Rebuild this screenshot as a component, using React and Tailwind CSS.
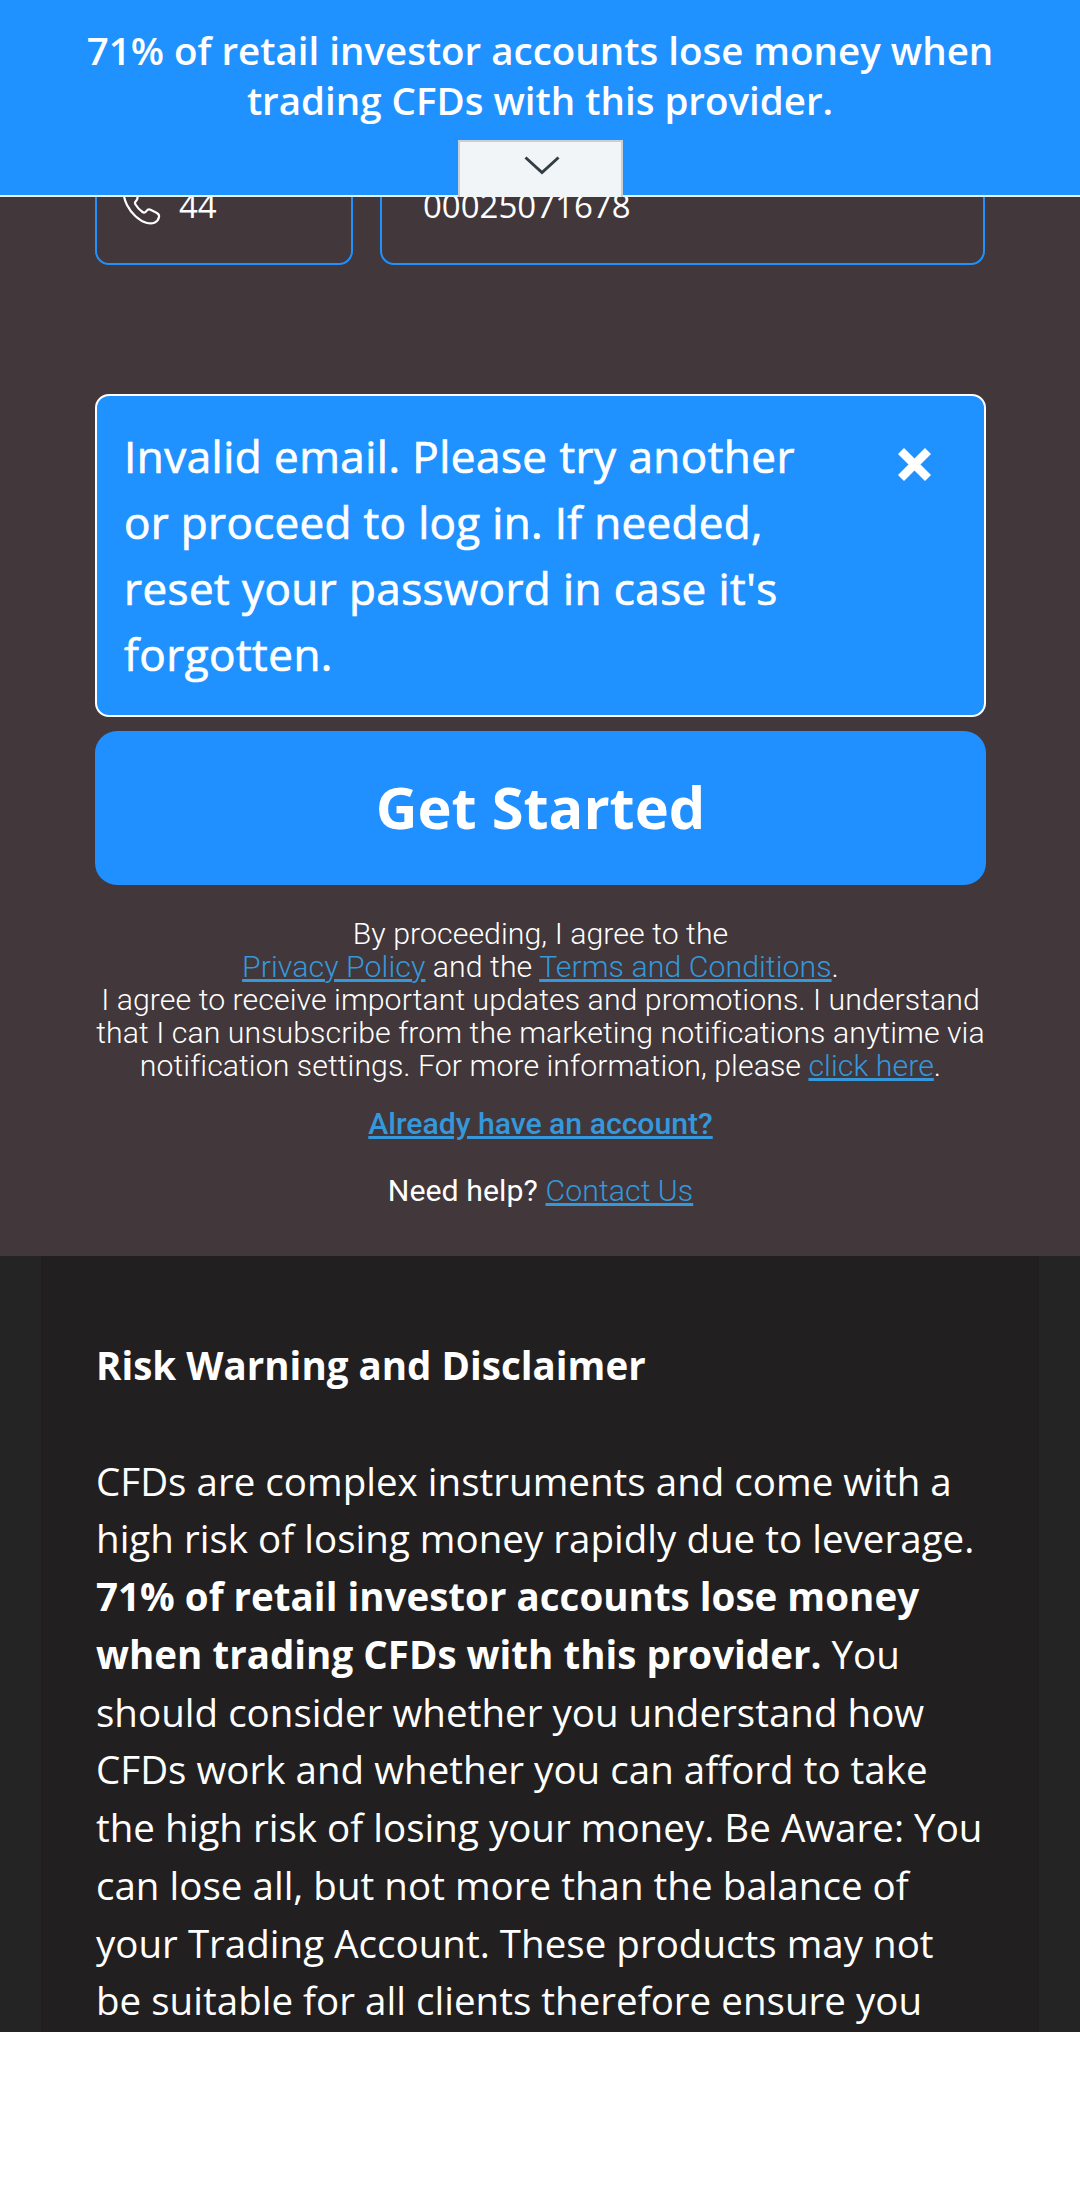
const Link = ({ children }) => (
  <a className="text-[#3498db] underline decoration-[3px] underline-offset-[2px]">{children}</a>
);

const riskIntro = ["CFDs are complex instruments and come with a", "high risk of losing money rapidly due to leverage."];
const riskBody = [
  "should consider whether you understand how",
  "CFDs work and whether you can afford to take",
  "the high risk of losing your money. Be Aware: You",
  "can lose all, but not more than the balance of",
  "your Trading Account. These products may not",
  "be suitable for all clients therefore ensure you",
];

export default function App() {
  return (
    <div className="h-[2186px] w-full overflow-hidden bg-white font-['Open_Sans',sans-serif] text-white">
      <header className="relative z-10 flex h-[197px] flex-col items-center border-b-2 border-[#e3f1f3] bg-[#2092ff] pt-[25px] text-center text-[38.5px] font-semibold leading-[50px]">
        <div className="whitespace-nowrap">71% of retail investor accounts lose money when</div>
        <div className="whitespace-nowrap">trading CFDs with this provider.</div>
        <div className="mt-[15px] flex h-[57px] w-[165px] shrink-0 items-start justify-center border-2 border-b-0 border-[#c9d0d4] bg-[#f1f5f8] pl-[4px] pt-[14px]">
          <svg width="36" height="20" viewBox="0 0 36 20" fill="none" stroke="#333d44" strokeWidth="3"><path d="M1.5 1.5L18 16.5L34.5 1.5" /></svg>
        </div>
      </header>
      <main className="h-[1059px] bg-[#42373a] px-[95px]">
        <div className="flex h-[68px] justify-between overflow-hidden">
          <div className="-mt-[40px] flex h-[108px] w-[258px] rounded-[14px] border-2 border-[#2092ff] pl-[24px] pt-[25px]">
            <svg className="mt-[1px]" width="42" height="42" viewBox="0 0 42 42" fill="none" stroke="white" strokeWidth="2.2" strokeLinejoin="round">
              <path d="M5 5C2 8 3 14 6 20C10 28 18 36 26 38C32 39.500 37 37 38 32C38.500 30 37 28.500 35 27.500L30 25C28 24 26.500 24.500 25.500 26C24.500 27.500 23 28 21.500 27C18.500 25 16 22 14.500 19.500C13.500 18 14 17 15 16C17 14 17 12 15.500 9.500L13 5C11 1.500 8 2 5 5Z" />
            </svg>
            <span className="ml-[16px] text-[33px] leading-[44px]">44</span>
          </div>
          <div className="-mt-[40px] h-[108px] w-[605px] rounded-[14px] border-2 border-[#2092ff] pl-[41px] pt-[25px] text-[33px] leading-[44px]">00025071678</div>
        </div>
        <div className="mt-[129px] flex h-[323px] w-[891px] justify-between rounded-[14px] border-2 border-white bg-[#2092ff] pl-[27px] pr-[53px] pt-[27px]">
          <div className="whitespace-nowrap text-[44px] font-medium leading-[66px] tracking-[0.465px] [-webkit-text-stroke:0.7px_white]">
            <div>Invalid email. Please try another</div>
            <div className="tracking-[0.32px]">or proceed to log in. If needed,</div>
            <div className="tracking-[0.42px]">reset your password in case it's</div>
            <div>forgotten.</div>
          </div>
          <svg className="mt-[25px]" width="33" height="33" viewBox="0 0 33 33" stroke="white" strokeWidth="8.5"><path d="M3 3L30 30M30 3L3 30" /></svg>
        </div>
        <button className="mt-[14px] block h-[154px] w-[891px] rounded-[22px] bg-[#208fff] pb-[2px] text-[57.75px] font-bold">Get Started</button>
        <div className="mt-[32px] w-[891px] whitespace-nowrap text-center font-['Roboto',sans-serif] text-[30.25px] font-light leading-[33px] tracking-[0.06px]">
          <div>By proceeding, I agree to the</div>
          <div><Link>Privacy Policy</Link> and the <Link>Terms and Conditions</Link>.</div>
          <div>I agree to receive important updates and promotions. I understand</div>
          <div>that I can unsubscribe from the marketing notifications anytime via</div>
          <div>notification settings. For more information, please <Link>click here</Link>.</div>
          <div className="mt-[25px] font-medium tracking-[-0.05px]"><Link>Already have an account?</Link></div>
          <div className="mt-[34px]"><span className="font-normal">Need help? </span><Link>Contact Us</Link></div>
        </div>
      </main>
      <section className="h-[776px] overflow-hidden bg-[#242424] px-[41px]">
        <div className="h-full whitespace-nowrap bg-[#221f20] pl-[55px] pt-[81px] text-[38.5px] leading-[57.75px] tracking-[0.02px]">
          <h2 className="mb-[57.75px] font-bold">Risk Warning and Disclaimer</h2>
          {riskIntro.map((t) => <div key={t}>{t}</div>)}
          <div className="font-bold">71% of retail investor accounts lose money</div>
          <div><b>when trading CFDs with this provider.</b> You</div>
          {riskBody.map((t) => <div key={t}>{t}</div>)}
        </div>
      </section>
    </div>
  );
}
